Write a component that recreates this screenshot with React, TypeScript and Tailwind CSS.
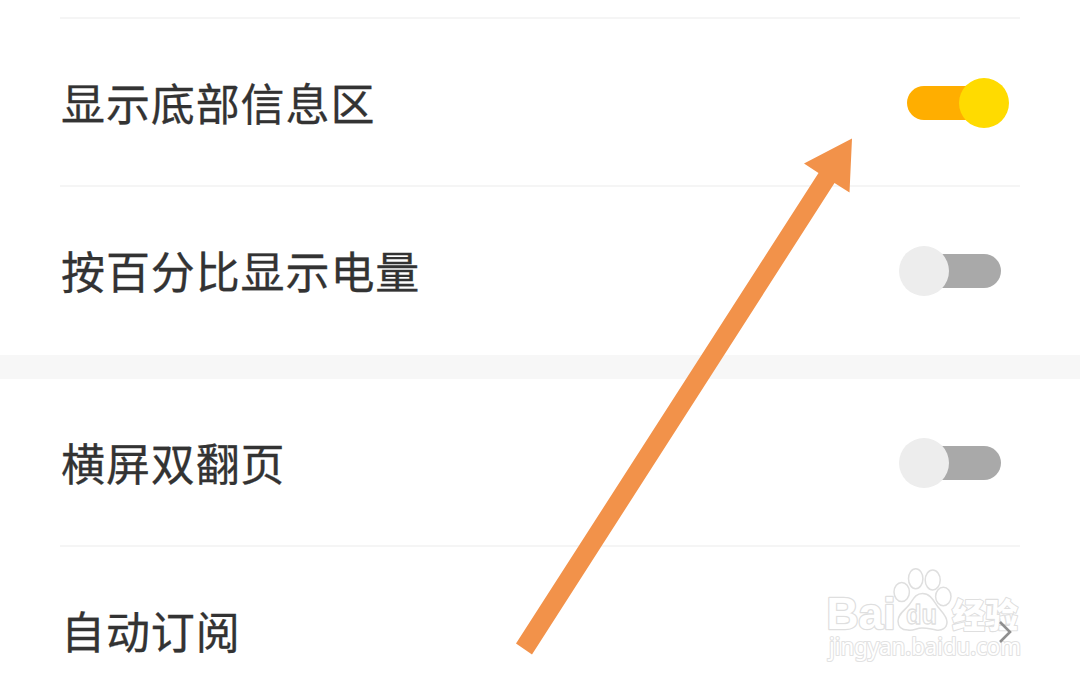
import type { ReactNode } from "react";

function Toggle({ on = false }: { on?: boolean }) {
  return on ? (
    <div className="relative mr-[11px] flex h-[50px] w-[102px] items-center">
      <div className="h-[34px] w-[86px] rounded-full bg-[#ffae00]" />
      <div className="absolute right-0 top-0 size-[50px] rounded-full bg-[#ffdb00]" />
    </div>
  ) : (
    <div className="relative mr-[19px] flex h-[50px] w-[102px] items-center justify-end">
      <div className="h-[34px] w-[86px] rounded-full bg-[#a9a9a9]" />
      <div className="absolute left-0 top-0 size-[50px] rounded-full bg-[#ededed]" />
    </div>
  );
}

function Row({ label, children }: { label: string; children: ReactNode }) {
  return (
    <div className="flex h-[168px] items-center justify-between">
      <span className="pb-[3px] pl-px text-[44px] leading-[60px] tracking-[0.900px] text-[#333333] [-webkit-text-stroke:0.300px_#333333]">
        {label}
      </span>
      {children}
    </div>
  );
}

function Divider() {
  return <div className="h-[2px] bg-[#f5f5f5]" />;
}

function Watermark() {
  return (
    <svg
      className="absolute left-[820px] top-[560px] overflow-visible"
      width="210"
      height="110"
      viewBox="0 0 210 110"
      fill="#ffffff"
      stroke="#dfdfdf"
      strokeWidth="1.5"
      strokeLinejoin="round"
    >
      <text x="6.500" y="68.500" fontSize="44" fontWeight="700" fontFamily="'Liberation Sans', sans-serif" textLength="69" lengthAdjust="spacingAndGlyphs" strokeWidth="2.600" paintOrder="stroke">Bai</text>
      <ellipse cx="81.700" cy="32" rx="7.700" ry="9.500" />
      <ellipse cx="95.700" cy="18.700" rx="7.200" ry="10" />
      <ellipse cx="112.700" cy="20" rx="7.500" ry="10" />
      <ellipse cx="123.300" cy="36.500" rx="7.700" ry="9.200" />
      <path d="M102.500 33.500C111 33.500 114 42 118 47C122 52 127 56 127 62C127 68 122 71 116 70C110 69 108 68 102 68C96 68 94 71 88 70C81 70 78 66 78 61C78 54 84 51 89 45C93 40 95 33.500 102.500 33.500Z" />
      <text x="86" y="64" fontSize="27" fontWeight="700" fontFamily="'Liberation Sans', sans-serif" textLength="31" lengthAdjust="spacingAndGlyphs" strokeWidth="1.300">du</text>
      <text x="132" y="68" fontSize="34" fontWeight="900" fontFamily="'Noto Sans CJK SC', sans-serif" textLength="66" lengthAdjust="spacingAndGlyphs" strokeWidth="2.200" paintOrder="stroke">经验</text>
      <text x="9" y="94.500" fontSize="23.500" fontFamily="'Noto Sans', sans-serif" textLength="192" lengthAdjust="spacingAndGlyphs" stroke="#e2e2e2" strokeWidth="2.200" paintOrder="stroke">jingyan.baidu.com</text>
    </svg>
  );
}

export default function App() {
  return (
    <main className="relative h-[684px] w-[1080px] overflow-hidden bg-white font-['Noto_Sans_CJK_SC',sans-serif]">
      <section className="h-[355px] px-[60px] pt-[17px]">
        <Divider />
        <div className="h-[166px]">
          <Row label="显示底部信息区"><Toggle on /></Row>
        </div>
        <Divider />
        <Row label="按百分比显示电量"><Toggle /></Row>
      </section>
      <div className="h-6 bg-[#f7f7f7]" />
      <section className="px-[60px]">
        <div className="h-[166px]">
          <Row label="横屏双翻页"><Toggle /></Row>
        </div>
        <Divider />
        <Row label="自动订阅">
          <svg className="relative z-10 mr-[6px]" width="16" height="26" viewBox="0 0 16 26" fill="none" stroke="#8f8f8f" strokeWidth="2.600">
            <path d="M2 4L12 14L2 24" />
          </svg>
        </Row>
      </section>
      <Watermark />
      <svg className="absolute left-0 top-0" width="1080" height="684" viewBox="0 0 1080 684">
        <polygon points="852,138.500 804,163.500 818.500,173 516,643.500 532,654.500 834.500,183 849.500,192.500" fill="#f2924a" />
      </svg>
    </main>
  );
}
